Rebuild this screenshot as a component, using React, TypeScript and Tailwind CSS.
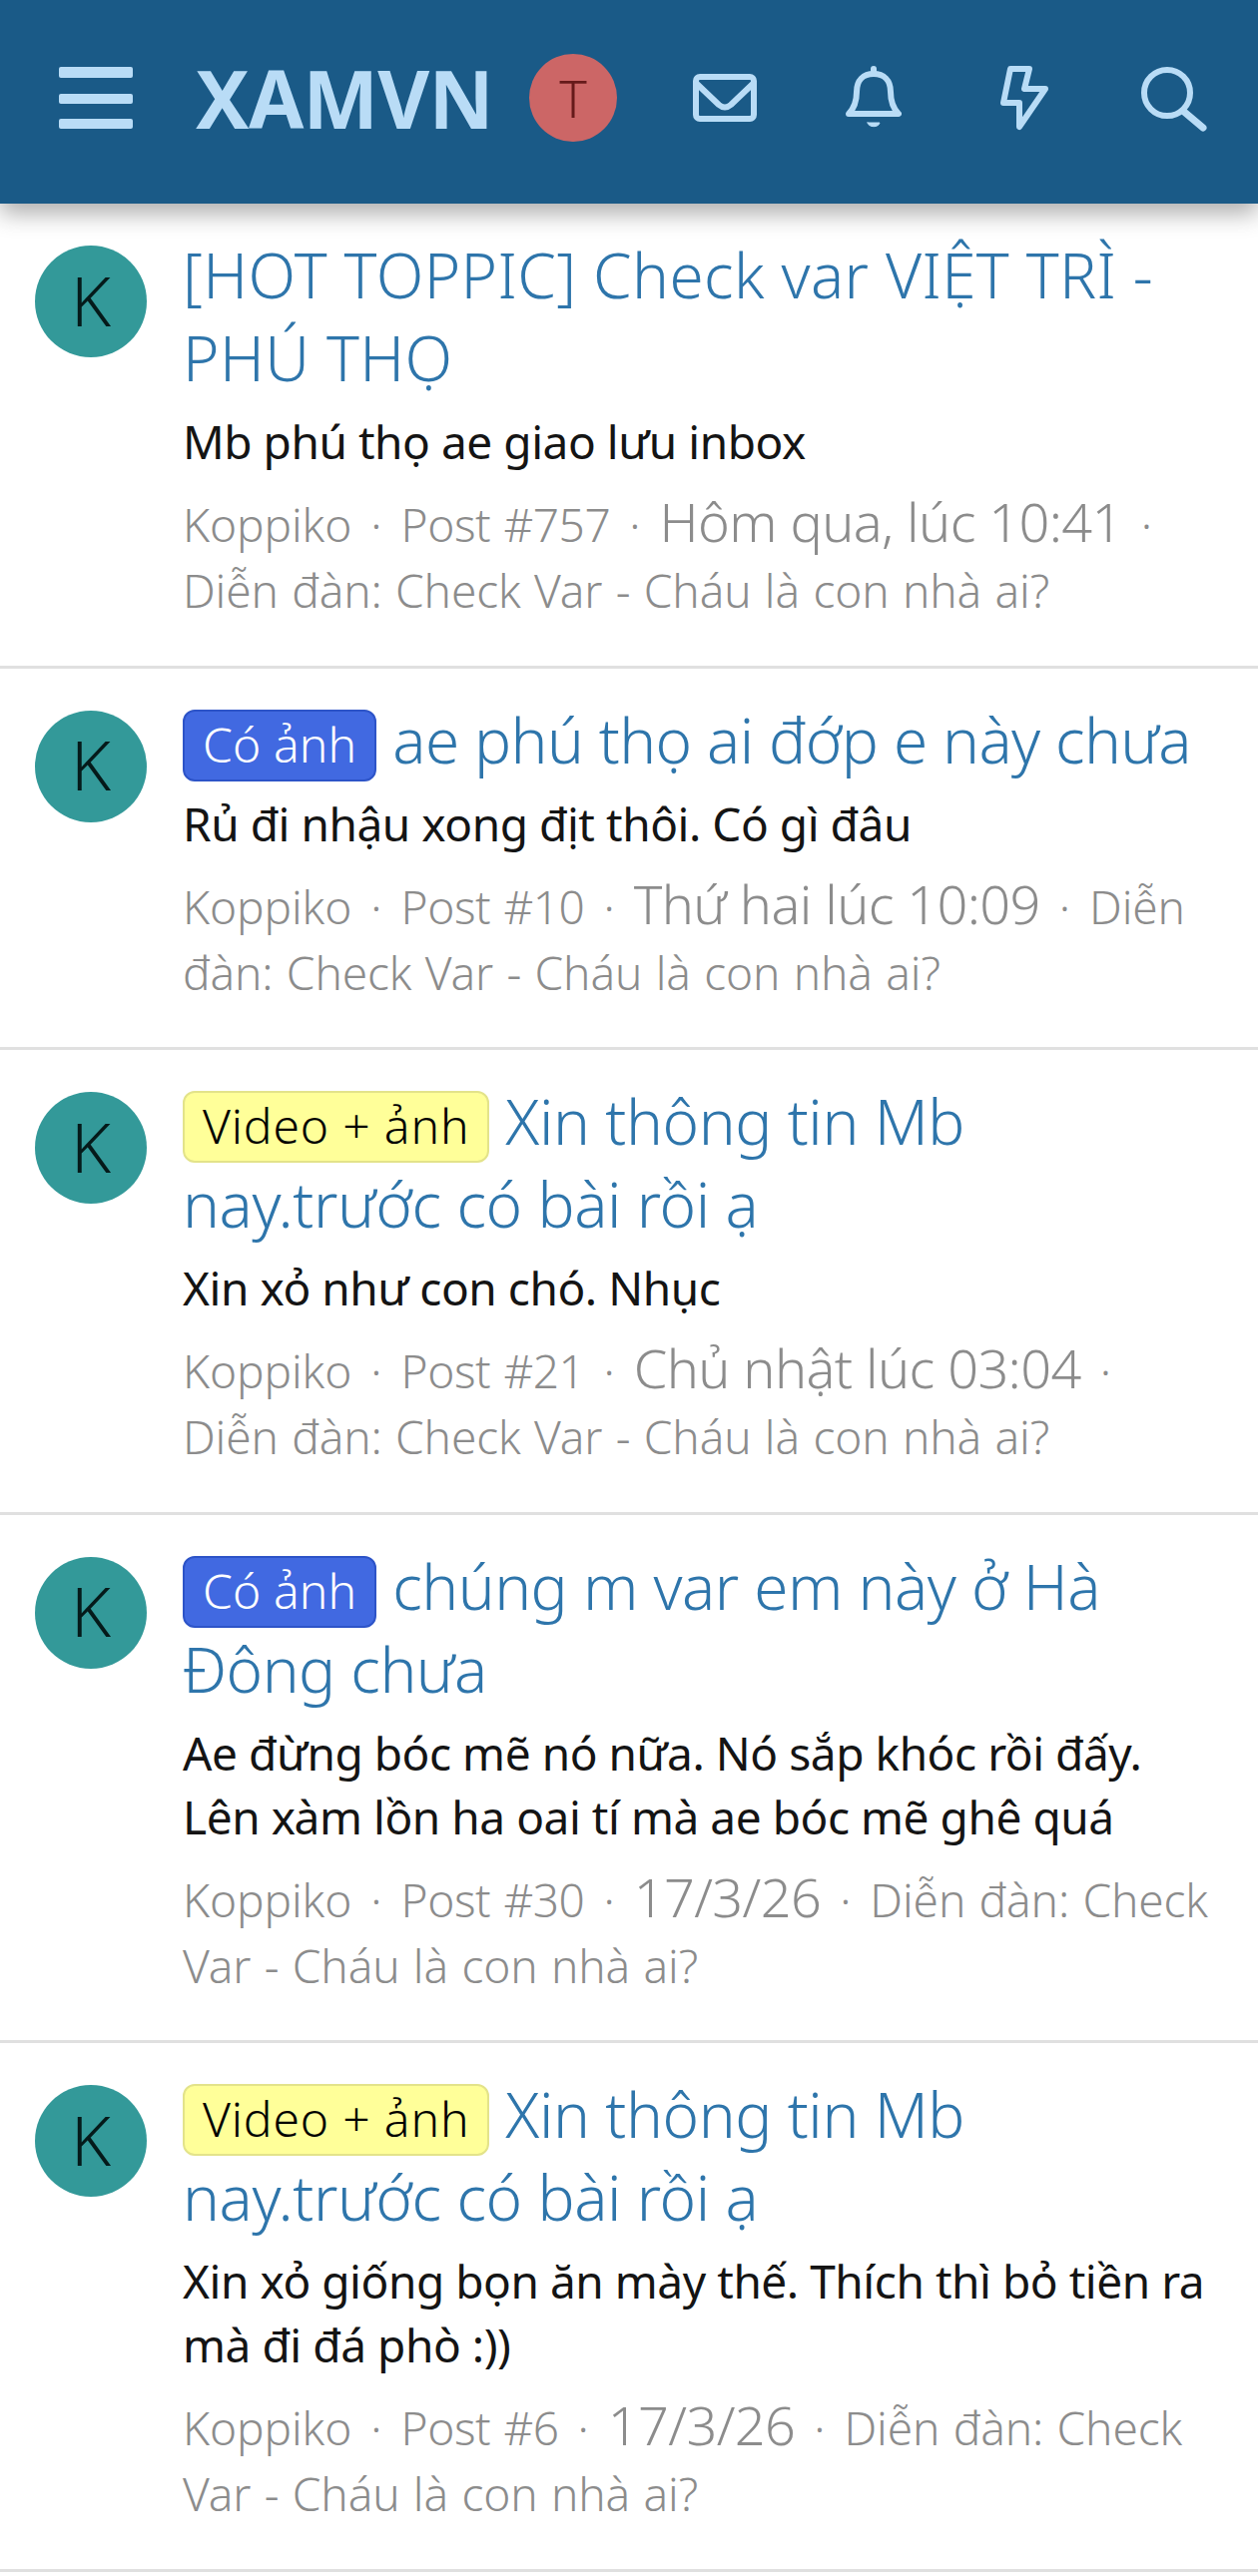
const font = { fontFamily: '"Noto Sans", sans-serif' };

type Row = {
  badge?: "blue" | "yellow";
  title: string[];
  track: string;
  body: string[];
  post: string;
  date: string;
  forum: string;
};

const forum = "Diễn đàn: Check Var - Cháu là con nhà ai?";

const rows: Row[] = [
  { title: ["[HOT TOPPIC] Check var VIỆT TRÌ -", "PHÚ THỌ"], track: "tracking-[0.4px]", body: ["Mb phú thọ ae giao lưu inbox"], post: "Post #757", date: "Hôm qua, lúc 10:41", forum },
  { badge: "blue", title: ["ae phú thọ ai đớp e này chưa"], track: "tracking-[-0.6px]", body: ["Rủ đi nhậu xong địt thôi. Có gì đâu"], post: "Post #10", date: "Thứ hai lúc 10:09", forum },
  { badge: "yellow", title: ["Xin thông tin Mb", "nay.trước có bài rồi ạ"], track: "tracking-[-0.4px]", body: ["Xin xỏ như con chó. Nhục"], post: "Post #21", date: "Chủ nhật lúc 03:04", forum },
  { badge: "blue", title: ["chúng m var em này ở Hà", "Đông chưa"], track: "tracking-[-0.5px]", body: ["Ae đừng bóc mẽ nó nữa. Nó sắp khóc rồi đấy.", "Lên xàm lồn ha oai tí mà ae bóc mẽ ghê quá"], post: "Post #30", date: "17/3/26", forum },
  { badge: "yellow", title: ["Xin thông tin Mb", "nay.trước có bài rồi ạ"], track: "tracking-[-0.4px]", body: ["Xin xỏ giống bọn ăn mày thế. Thích thì bỏ tiền ra", "mà đi đá phò :))"], post: "Post #6", date: "17/3/26", forum },
];

function Header() {
  return (
    <header className="relative z-10 flex h-[204px] items-center bg-[#1a5a87] pb-[8px] pl-[59px] text-[#b9dcf6] shadow-[0_10px_22px_rgba(0,0,0,0.32)]">
      <div className="flex h-[62px] w-[74px] flex-col justify-between">
        <div className="h-[11px] rounded-[2px] bg-[#b9dcf6]" />
        <div className="h-[10px] rounded-[2px] bg-[#b9dcf6]" />
        <div className="h-[10px] rounded-[2px] bg-[#b9dcf6]" />
      </div>
      <div className="ml-[63px] text-[80px] leading-none font-bold tracking-[-0.7px]">XAMVN</div>
      <div className="ml-[36px] flex h-[88px] w-[88px] items-center justify-center rounded-full bg-[#cc6666] text-[52px] font-light text-[#661a1a]">T</div>
      <svg className="ml-[76px]" width="64" height="48" viewBox="0 0 64 48" fill="none" stroke="currentColor" strokeWidth="6" strokeLinejoin="round" strokeLinecap="round">
        <rect x="3" y="3" width="58" height="42" rx="4" />
        <path d="M4 10 L26 31 Q32 36 38 31 L60 10" />
      </svg>
      <svg className="ml-[89px]" width="56" height="64" viewBox="0 0 56 64" fill="none" stroke="currentColor" strokeWidth="6" strokeLinejoin="round" strokeLinecap="round">
        <path d="M3 48 C9 42 11 36 11 26 C11 14 18 8 28 8 C38 8 45 14 45 26 C45 36 47 42 53 48 Z" />
        <path d="M28 3 V7" />
        <path d="M22 57 H34 C33 62 23 62 22 57 Z" fill="currentColor" strokeWidth="1" />
      </svg>
      <svg className="ml-[98px]" width="50" height="66" viewBox="0 0 50 66" fill="none" stroke="currentColor" strokeWidth="6" strokeLinejoin="round" strokeLinecap="round">
        <path d="M11 4 H30 L25 24 H46 L20 62 V38 H4 Z" />
      </svg>
      <svg className="ml-[89px]" width="70" height="68" viewBox="0 0 70 68" fill="none" stroke="currentColor" strokeWidth="6" strokeLinecap="round">
        <circle cx="29" cy="29" r="23" />
        <path d="M46 48 L65 64" strokeWidth="7" />
      </svg>
    </header>
  );
}

function Badge({ kind }: { kind: "blue" | "yellow" }) {
  if (kind === "blue") {
    return (
      <span className="mr-[16px] inline-block h-[72px] rounded-[12px] border-2 border-[#2d54c8] bg-[#4169e1] px-[18px] align-[1px] text-[48px] leading-[66px] font-[360] tracking-[0.1px] text-white">
        Có ảnh
      </span>
    );
  }
  return (
    <span className="mr-[16px] inline-block h-[72px] rounded-[12px] border-2 border-[#e3e38a] bg-[#ffff99] px-[18px] align-[1px] text-[48px] leading-[66px] font-[360] tracking-[0.85px] text-black">
      Video + ảnh
    </span>
  );
}

function Sep() {
  return (
    <>
      <span className="mx-[19px] tracking-normal">·</span>
      <wbr />
    </>
  );
}

function PostRow({ row }: { row: Row }) {
  return (
    <article className="flex gap-[36px] border-b-[3px] border-[#e0e0e0] pt-[30px] pr-[34px] pb-[42.6px] pl-[35px]">
      <div className="mt-[12px] flex h-[112px] w-[112px] shrink-0 items-center justify-center rounded-full bg-[#339999] pb-[3px] text-[68px] font-light text-[#051a1a]">K</div>
      <div className="min-w-0 flex-1">
        <h3 className={"text-[62px] leading-[83px] font-[330] text-[#2e75ab] " + row.track}>
          {row.badge && <Badge kind={row.badge} />}
          {row.title.map((line, i) => (
            <span key={i}>
              {i > 0 && <br />}
              {line}
            </span>
          ))}
        </h3>
        <div className="mt-[10px] text-[46px] leading-[64px] font-[380] tracking-[-0.45px] text-[#141414]">
          {row.body.map((line) => (
            <div key={line}>{line}</div>
          ))}
        </div>
        <div className="mt-[18px] text-[46px] leading-[66px] font-[320] tracking-[-0.1px] text-[#8c8c8c] [word-spacing:1.5px]">
          Koppiko<Sep /><span className="tracking-[-0.4px]">{row.post}</span><Sep /><span className="whitespace-nowrap text-[54px] leading-[50px] tracking-[-0.6px] [word-spacing:0px]">{row.date}</span><Sep />{row.forum}
        </div>
      </div>
    </article>
  );
}

export default function App() {
  return (
    <div className="min-h-[2581px] bg-white" style={font}>
      <Header />
      {rows.map((r, i) => (
        <PostRow key={i} row={r} />
      ))}
    </div>
  );
}
